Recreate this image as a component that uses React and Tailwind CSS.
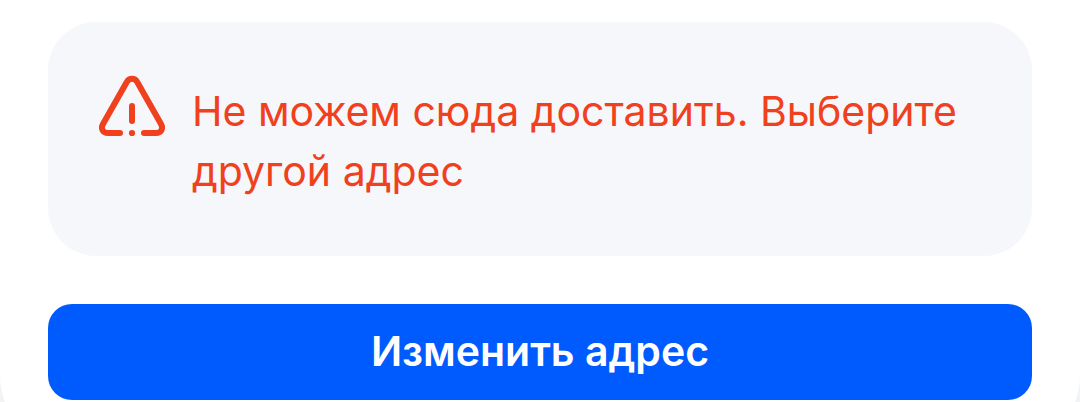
import React from 'react';

const WarningIcon = () => (
    <svg
        viewBox="0 0 72 72"
        className="w-18 h-18 shrink-0"
        fill="none"
        stroke="currentColor"
        strokeWidth="6"
        strokeLinecap="round"
        strokeLinejoin="round"
        aria-hidden="true"
    >
        <path d="M24 61H12C6.5 61 4.5 56.5 7 52L30.5 10.5C33 5.5 39 5.5 41.5 10.5L65 52C67.5 56.5 65.5 61 60 61H48" />
        <path d="M36 34V49" />
        <circle cx="36" cy="61" r="3.1" fill="currentColor" stroke="none" />
    </svg>
);

export default function App() {
    return (
        <div className="h-screen overflow-hidden bg-[#f2f3f5] font-['Inter','Noto_Sans',sans-serif]">
            <main className="flex flex-col gap-12 bg-white rounded-b-[72px] px-12 pt-[22px] pb-12">
                <div className="flex gap-6 bg-[#f5f7fa] rounded-[48px] px-12 pt-[50px] pb-[55px] text-[#f1401d]">
                    <WarningIcon />
                    <p className="pt-[9px] text-[41px] leading-[60px]">
                        Не можем сюда доставить. Выберите другой адрес
                    </p>
                </div>
                <button type="button" className="h-24 w-full rounded-3xl bg-[#005bff] text-[41px] font-semibold text-white">
                    Изменить адрес
                </button>
            </main>
        </div>
    );
}
